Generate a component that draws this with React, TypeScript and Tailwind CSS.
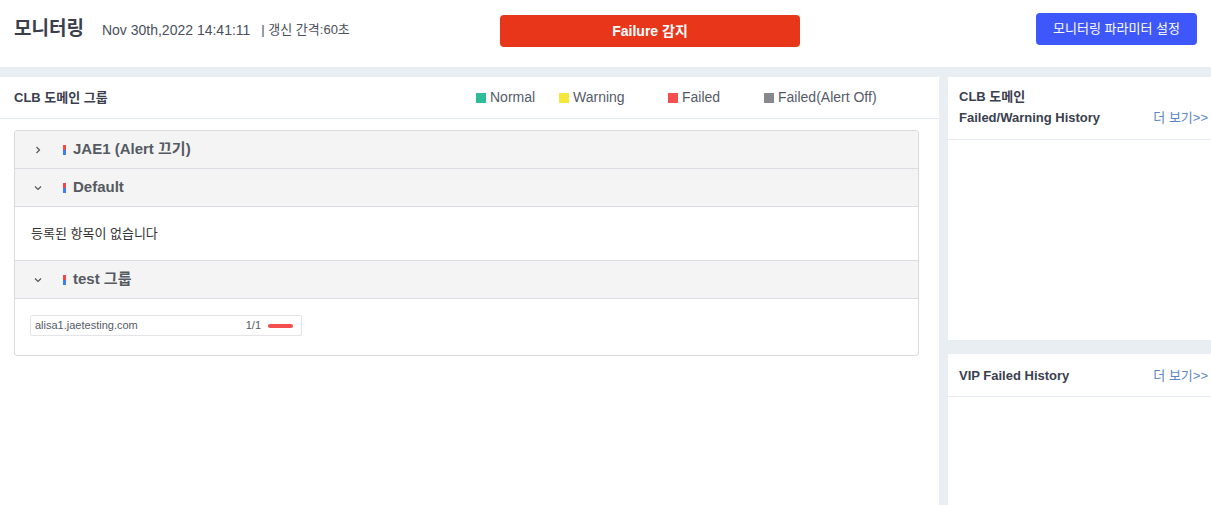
import React from "react";

const font = { fontFamily: '"Liberation Sans", Arial, "Noto Sans CJK KR", sans-serif' };

function Chevron({ open }: { open: boolean }) {
  return (
    <svg width="10" height="10" viewBox="0 0 10 10" className="text-[#555]">
      {open ? (
        <path d="M2 3.5 L5 6.5 L8 3.5" fill="none" stroke="currentColor" strokeWidth="1.2" />
      ) : (
        <path d="M3.5 2 L6.5 5 L3.5 8" fill="none" stroke="currentColor" strokeWidth="1.2" />
      )}
    </svg>
  );
}

function Marker() {
  return (
    <span className="flex flex-col w-[3px] mr-[7px]">
      <span className="h-[5px] bg-[#f04848]" />
      <span className="h-[5px] bg-[#3d7ff0]" />
    </span>
  );
}

function GroupHeader({ title, open }: { title: string; open: boolean }) {
  return (
    <div className="h-[38px] bg-[#f4f4f5] border-b border-[#dcdce2] flex items-center pl-[18px]">
      <span className="w-[10px] flex items-center justify-center">
        <Chevron open={open} />
      </span>
      <span className="w-[20px]" />
      <Marker />
      <span className="text-[15px] font-bold text-[#555a60]">{title}</span>
    </div>
  );
}

function Legend({ color, label, w }: { color: string; label: string; w: string }) {
  return (
    <div className={`flex items-center ${w}`}>
      <span className="w-[10px] h-[10px] mr-[4px]" style={{ background: color }} />
      <span className="text-[14px] text-[#555b68]">{label}</span>
    </div>
  );
}

export default function App() {
  return (
    <div className="w-[1211px] h-[505px] bg-[#e9eef3] overflow-hidden" style={font}>
      <div className="h-[67px] bg-white flex pt-[13px] pl-[14px]">
        <div className="w-[486px] flex items-start pt-[2px]">
          <span className="text-[19px] font-bold text-[#3a3f4b] leading-[28px]">모니터링</span>
          <span className="ml-[18px] text-[14px] text-[#4a505c] leading-[30px]">Nov 30th,2022 14:41:11</span>
          <span className="ml-[11px] text-[13px] text-[#4a505c] leading-[30px]">| 갱신 간격:60초</span>
        </div>
        <div className="w-[300px] h-[32px] mt-[2px] bg-[#e8361b] rounded-[4px] flex items-center justify-center text-white font-bold text-[14px]">
          Failure 감지
        </div>
        <div className="ml-auto mr-[14px] w-[161px] h-[32px] bg-[#3d57fb] rounded-[4px] flex items-center justify-center text-white text-[13px]">
          모니터링 파라미터 설정
        </div>
      </div>
      <div className="flex mt-[10px] h-[428px]">
        <div className="w-[939px] bg-white h-full">
          <div className="h-[42px] border-b border-[#e6ebf1] flex items-center pl-[14px]">
            <span className="w-[462px] text-[13px] font-bold text-[#3a404e]">CLB 도메인 그룹</span>
            <Legend color="#2dbd98" label="Normal" w="w-[83px]" />
            <Legend color="#f5e83a" label="Warning" w="w-[109px]" />
            <Legend color="#f54e4e" label="Failed" w="w-[96px]" />
            <Legend color="#86888c" label="Failed(Alert Off)" w="w-[150px]" />
          </div>
          <div className="mt-[11px] ml-[14px] w-[905px] border border-[#d9d9de] rounded-[3px] overflow-hidden">
            <GroupHeader title="JAE1 (Alert 끄기)" open={false} />
            <GroupHeader title="Default" open={true} />
            <div className="h-[54px] border-b border-[#dcdce2] flex items-center pl-[16px] text-[13px] text-[#333]">
              등록된 항목이 없습니다
            </div>
            <GroupHeader title="test 그룹" open={true} />
            <div className="h-[56px] pt-[16px] pl-[15px]">
              <div className="w-[272px] h-[21px] border border-[#e3e3e8] rounded-[2px] flex items-center pl-[4px] pr-[8px]">
                <span className="text-[11px] text-[#555a66]">alisa1.jaetesting.com</span>
                <span className="ml-auto text-[11px] text-[#555a66]">1/1</span>
                <span className="ml-[7px] w-[25px] h-[4px] rounded-full bg-[#f54e4e]" />
              </div>
            </div>
          </div>
        </div>
        <div className="ml-[9px] flex-1 flex flex-col gap-[14px]">
          <div className="h-[263px] bg-white">
            <div className="h-[63px] border-b border-[#e6ebf1] pl-[11px] pr-[3px] pt-[9px] flex">
              <div className="text-[13px] font-bold text-[#3a404e] leading-[21px]">
                <div>CLB 도메인</div>
                <div>Failed/Warning History</div>
              </div>
              <span className="ml-auto mt-[21px] text-[13px] text-[#5b87c7] leading-[21px]">더 보기&gt;&gt;</span>
            </div>
          </div>
          <div className="flex-1 bg-white">
            <div className="h-[43px] border-b border-[#e6ebf1] pl-[11px] pr-[3px] pt-[1px] flex items-center">
              <span className="text-[13px] font-bold text-[#3a404e]">VIP Failed History</span>
              <span className="ml-auto text-[13px] text-[#5b87c7]">더 보기&gt;&gt;</span>
            </div>
          </div>
        </div>
      </div>
    </div>
  );
}
